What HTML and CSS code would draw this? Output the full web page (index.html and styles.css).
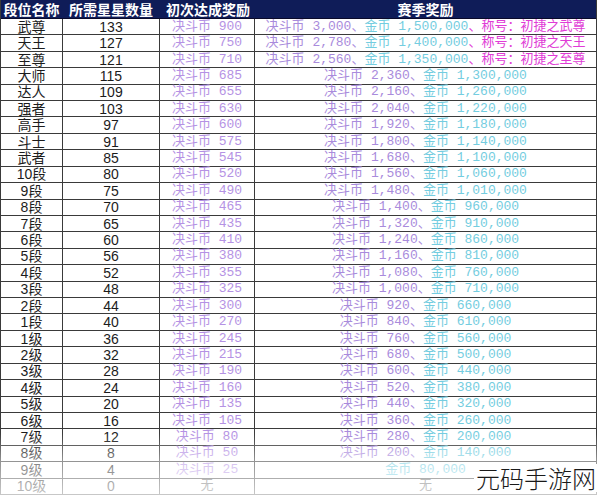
FILE: index.html
```html
<!DOCTYPE html>
<html lang="zh">
<head>
<meta charset="utf-8">
<link rel="stylesheet" href="styles.css">
</head>
<body>
<div class="page">
  <div class="sheet">
    <div class="row head"><div class="c1">段位名称</div><div class="c2">所需星星数量</div><div class="c3">初次达成奖励</div><div class="c4">赛季奖励</div></div>
    <div class="row"><div class="c1">武尊</div><div class="c2">133</div><div class="c3">决斗币 900</div><div class="c4"><span class="p">决斗币 3,000、</span><span class="g">金币 1,500,000</span><span class="m">、称号：初捷之武尊</span></div></div>
    <div class="row"><div class="c1">天王</div><div class="c2">127</div><div class="c3">决斗币 750</div><div class="c4"><span class="p">决斗币 2,780、</span><span class="g">金币 1,400,000</span><span class="m">、称号：初捷之天王</span></div></div>
    <div class="row"><div class="c1">至尊</div><div class="c2">121</div><div class="c3">决斗币 710</div><div class="c4"><span class="p">决斗币 2,560、</span><span class="g">金币 1,350,000</span><span class="m">、称号：初捷之至尊</span></div></div>
    <div class="row"><div class="c1">大师</div><div class="c2">115</div><div class="c3">决斗币 685</div><div class="c4"><span class="p">决斗币 2,360、</span><span class="g">金币 1,300,000</span></div></div>
    <div class="row"><div class="c1">达人</div><div class="c2">109</div><div class="c3">决斗币 655</div><div class="c4"><span class="p">决斗币 2,160、</span><span class="g">金币 1,260,000</span></div></div>
    <div class="row"><div class="c1">强者</div><div class="c2">103</div><div class="c3">决斗币 630</div><div class="c4"><span class="p">决斗币 2,040、</span><span class="g">金币 1,220,000</span></div></div>
    <div class="row"><div class="c1">高手</div><div class="c2">97</div><div class="c3">决斗币 600</div><div class="c4"><span class="p">决斗币 1,920、</span><span class="g">金币 1,180,000</span></div></div>
    <div class="row"><div class="c1">斗士</div><div class="c2">91</div><div class="c3">决斗币 575</div><div class="c4"><span class="p">决斗币 1,800、</span><span class="g">金币 1,140,000</span></div></div>
    <div class="row"><div class="c1">武者</div><div class="c2">85</div><div class="c3">决斗币 545</div><div class="c4"><span class="p">决斗币 1,680、</span><span class="g">金币 1,100,000</span></div></div>
    <div class="row"><div class="c1">10段</div><div class="c2">80</div><div class="c3">决斗币 520</div><div class="c4"><span class="p">决斗币 1,560、</span><span class="g">金币 1,060,000</span></div></div>
    <div class="row"><div class="c1">9段</div><div class="c2">75</div><div class="c3">决斗币 490</div><div class="c4"><span class="p">决斗币 1,480、</span><span class="g">金币 1,010,000</span></div></div>
    <div class="row"><div class="c1">8段</div><div class="c2">70</div><div class="c3">决斗币 465</div><div class="c4"><span class="p">决斗币 1,400、</span><span class="g">金币 960,000</span></div></div>
    <div class="row"><div class="c1">7段</div><div class="c2">65</div><div class="c3">决斗币 435</div><div class="c4"><span class="p">决斗币 1,320、</span><span class="g">金币 910,000</span></div></div>
    <div class="row"><div class="c1">6段</div><div class="c2">60</div><div class="c3">决斗币 410</div><div class="c4"><span class="p">决斗币 1,240、</span><span class="g">金币 860,000</span></div></div>
    <div class="row"><div class="c1">5段</div><div class="c2">56</div><div class="c3">决斗币 380</div><div class="c4"><span class="p">决斗币 1,160、</span><span class="g">金币 810,000</span></div></div>
    <div class="row"><div class="c1">4段</div><div class="c2">52</div><div class="c3">决斗币 355</div><div class="c4"><span class="p">决斗币 1,080、</span><span class="g">金币 760,000</span></div></div>
    <div class="row"><div class="c1">3段</div><div class="c2">48</div><div class="c3">决斗币 325</div><div class="c4"><span class="p">决斗币 1,000、</span><span class="g">金币 710,000</span></div></div>
    <div class="row"><div class="c1">2段</div><div class="c2">44</div><div class="c3">决斗币 300</div><div class="c4"><span class="p">决斗币 920、</span><span class="g">金币 660,000</span></div></div>
    <div class="row"><div class="c1">1段</div><div class="c2">40</div><div class="c3">决斗币 270</div><div class="c4"><span class="p">决斗币 840、</span><span class="g">金币 610,000</span></div></div>
    <div class="row"><div class="c1">1级</div><div class="c2">36</div><div class="c3">决斗币 245</div><div class="c4"><span class="p">决斗币 760、</span><span class="g">金币 560,000</span></div></div>
    <div class="row"><div class="c1">2级</div><div class="c2">32</div><div class="c3">决斗币 215</div><div class="c4"><span class="p">决斗币 680、</span><span class="g">金币 500,000</span></div></div>
    <div class="row"><div class="c1">3级</div><div class="c2">28</div><div class="c3">决斗币 190</div><div class="c4"><span class="p">决斗币 600、</span><span class="g">金币 440,000</span></div></div>
    <div class="row"><div class="c1">4级</div><div class="c2">24</div><div class="c3">决斗币 160</div><div class="c4"><span class="p">决斗币 520、</span><span class="g">金币 380,000</span></div></div>
    <div class="row"><div class="c1">5级</div><div class="c2">20</div><div class="c3">决斗币 135</div><div class="c4"><span class="p">决斗币 440、</span><span class="g">金币 320,000</span></div></div>
    <div class="row"><div class="c1">6级</div><div class="c2">16</div><div class="c3">决斗币 105</div><div class="c4"><span class="p">决斗币 360、</span><span class="g">金币 260,000</span></div></div>
    <div class="row"><div class="c1">7级</div><div class="c2">12</div><div class="c3">决斗币 80</div><div class="c4"><span class="p">决斗币 280、</span><span class="g">金币 200,000</span></div></div>
    <div class="row"><div class="c1">8级</div><div class="c2">8</div><div class="c3">决斗币 50</div><div class="c4"><span class="p">决斗币 200、</span><span class="g">金币 140,000</span></div></div>
    <div class="row"><div class="c1">9级</div><div class="c2">4</div><div class="c3">决斗币 25</div><div class="c4"><span class="g">金币 80,000</span></div></div>
    <div class="row last"><div class="c1">10级</div><div class="c2">0</div><div class="c3 plain">无</div><div class="c4 plain">无</div></div>
  </div>
  <div class="fade"></div>
  <div class="mark">元码手游网</div>
</div>
</body>
</html>
```
FILE: styles.css
```css
html, body {
  margin: 0;
  padding: 0;
  background: #ffffff;
}
.page {
  position: relative;
  width: 600px;
  height: 495px;
  overflow: hidden;
}
.sheet {
  display: grid;
  grid-template-rows: 19px repeat(29, 1fr);
  width: 597px;
  height: 495px;
  border-left: 1px solid #3a3a3a;
  border-right: 1px solid #3a3a3a;
  box-sizing: border-box;
}
.row {
  display: grid;
  grid-template-columns: 62px 97px 95px 1fr;
  border-bottom: 1px solid #3a3a3a;
  min-height: 0;
}
.row > div {
  display: flex;
  align-items: center;
  justify-content: center;
  white-space: nowrap;
  line-height: 14px;
  min-height: 0;
  border-right: 1px solid #3a3a3a;
}
.row > div.c4 { border-right: none; }
.c1 {
  font-family: "Liberation Sans", "Noto Sans CJK SC", sans-serif;
  font-size: 14px;
  color: #1c1c1c;
}
.c2 {
  font-family: "Liberation Sans", sans-serif;
  font-size: 14px;
  color: #1c1c1c;
}
.c3, .c4 {
  font-family: "Liberation Mono", "Noto Sans CJK SC", monospace;
  font-size: 13px;
}
.c3 { color: #b592e4; }
.p { color: #a98bdc; }
.g { color: #74cde0; }
.m { color: #e03cd6; }
.plain { color: #555555; }
.head {
  background: #0f1c58;
  border-bottom: 1px solid #0a0a2a;
}
.head > div {
  color: #ffffff;
  font-family: "Noto Sans CJK SC", sans-serif;
  font-weight: bold;
  font-size: 14px;
  border-right-color: #0f1c58;
}
.head > .c3 { justify-content: flex-start; padding-left: 6px; }
.fade {
  position: absolute;
  left: 0;
  right: 0;
  bottom: 0;
  height: 62px;
  background: linear-gradient(to bottom, rgba(255,255,255,0) 0%, rgba(255,255,255,0.45) 45%, rgba(255,255,255,0.72) 100%);
  pointer-events: none;
}
.mark {
  position: absolute;
  right: 2px;
  bottom: 3px;
  padding: 0 2px;
  background: #ffffff;
  font-family: "Noto Sans CJK SC", sans-serif;
  font-weight: 300;
  font-size: 24px;
  line-height: 28px;
  color: #1a1a1a;
}
```
